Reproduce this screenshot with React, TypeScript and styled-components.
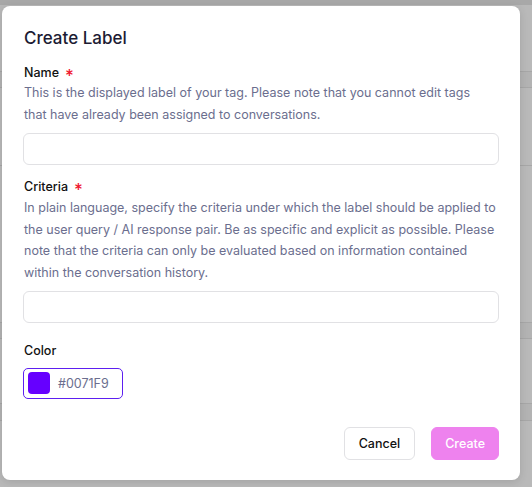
import React from "react";
import styled, { createGlobalStyle } from "styled-components";

const Global = createGlobalStyle`
  html, body { margin: 0; padding: 0; }
  body {
    font-family: Inter, "Noto Sans", sans-serif;
    width: 532px;
    height: 487px;
    overflow: hidden;
  }
`;

const Backdrop = styled.div`
  position: relative;
  width: 532px;
  height: 487px;
  background: #b9b9b9;
  overflow: hidden;
`;

const TopStrip = styled.div`
  height: 5px;
  background: #a8a8a8;
`;

const BgLine = styled.div<{ $top: number; $h: number }>`
  position: absolute;
  left: 0;
  right: 0;
  top: ${(p) => p.$top}px;
  height: ${(p) => p.$h}px;
  border-top: 1px solid #a7a7a7;
  border-bottom: ${(p) => (p.$h > 1 ? "1px solid #a7a7a7" : "none")};
  background: ${(p) => (p.$h > 1 ? "#b3b3b3" : "transparent")};
  box-sizing: border-box;
`;

const Modal = styled.div`
  position: absolute;
  left: 2px;
  top: 6px;
  width: 518px;
  height: 474px;
  background: #ffffff;
  border-radius: 8px;
  box-shadow: 0 2px 8px rgba(0, 0, 0, 0.12);
  box-sizing: border-box;
  padding: 21px 21px 20px 21px;
  display: flex;
  flex-direction: column;
`;

const Title = styled.h2`
  margin: 0 0 0 1px;
  font-size: 17px;
  font-weight: 500;
  color: #1c1b33;
  line-height: 22px;
`;

const Field = styled.div<{ $mt: number }>`
  margin-top: ${(p) => p.$mt}px;
  display: flex;
  flex-direction: column;
`;

const Label = styled.div`
  font-size: 12.5px;
  font-weight: 500;
  color: #111111;
  line-height: 18px;
  display: flex;
  align-items: center;
  padding-left: 1px;
`;

const Star = styled.span`
  display: inline-block;
  color: #f0182f;
  margin-left: 6px;
  font-size: 17px;
  line-height: 12px;
  height: 12px;
  overflow: visible;
  transform: translateY(3px);
`;

const Help = styled.p<{ $mt?: number }>`
  margin: ${(p) => p.$mt ?? 0}px 0 0 0;
  padding-left: 1px;
  font-size: 12.5px;
  line-height: 21.6px;
  color: #6b6e8e;
`;

const Input = styled.input<{ $mt: number }>`
  margin-top: ${(p) => p.$mt}px;
  height: 32px;
  box-sizing: border-box;
  border: 1px solid #e1e1e4;
  border-radius: 6px;
  outline: none;
  width: 100%;
  padding: 0 10px;
  font-family: inherit;
`;

const ColorBox = styled.div`
  margin-top: 8px;
  width: 100px;
  height: 31px;
  box-sizing: border-box;
  border: 1px solid #5d1ff0;
  border-radius: 5px;
  display: flex;
  align-items: center;
  padding: 0 4px;
  gap: 8px;
`;

const Swatch = styled.div<{ $c: string }>`
  width: 22px;
  height: 22px;
  border-radius: 4px;
  background: ${(p) => p.$c};
`;

const Hex = styled.span`
  font-size: 12.5px;
  color: #6b6e8e;
`;

const Footer = styled.div`
  margin-top: auto;
  display: flex;
  justify-content: flex-end;
  gap: 16px;
`;

const Button = styled.button<{ $primary?: boolean }>`
  height: 33px;
  box-sizing: border-box;
  padding: 0 ${(p) => (p.$primary ? 13 : 14)}px;
  border-radius: 6px;
  font-family: inherit;
  font-size: 12.5px;
  font-weight: 500;
  border: 1px solid ${(p) => (p.$primary ? "#ee82ee" : "#e1e1e4")};
  background: ${(p) => (p.$primary ? "#ee82ee" : "#ffffff")};
  color: ${(p) => (p.$primary ? "#ffffff" : "#111111")};
`;

export default function App() {
  return (
    <>
      <Global />
      <Backdrop>
        <TopStrip />
        <BgLine $top={71} $h={17} />
        <BgLine $top={165} $h={1} />
        <BgLine $top={322} $h={17} />
        <BgLine $top={403} $h={18} />
        <Modal>
          <Title>Create Label</Title>
          <Field $mt={15}>
            <Label>
              Name <Star>*</Star>
            </Label>
            <Help>
              This is the displayed label of your tag. Please note that you cannot edit tags
              <br />
              that have already been assigned to conversations.
            </Help>
            <Input $mt={8} />
          </Field>
          <Field $mt={13}>
            <Label>
              Criteria <Star>*</Star>
            </Label>
            <Help $mt={1}>
              In plain language, specify the criteria under which the label should be applied to
              the user query / AI response pair. Be as specific and explicit as possible. Please
              note that the criteria can only be evaluated based on information contained
              within the conversation history.
            </Help>
            <Input $mt={7} />
          </Field>
          <Field $mt={19}>
            <Label>Color</Label>
            <ColorBox>
              <Swatch $c="#6600ff" />
              <Hex>#0071F9</Hex>
            </ColorBox>
          </Field>
          <Footer>
            <Button>Cancel</Button>
            <Button $primary>Create</Button>
          </Footer>
        </Modal>
      </Backdrop>
    </>
  );
}
